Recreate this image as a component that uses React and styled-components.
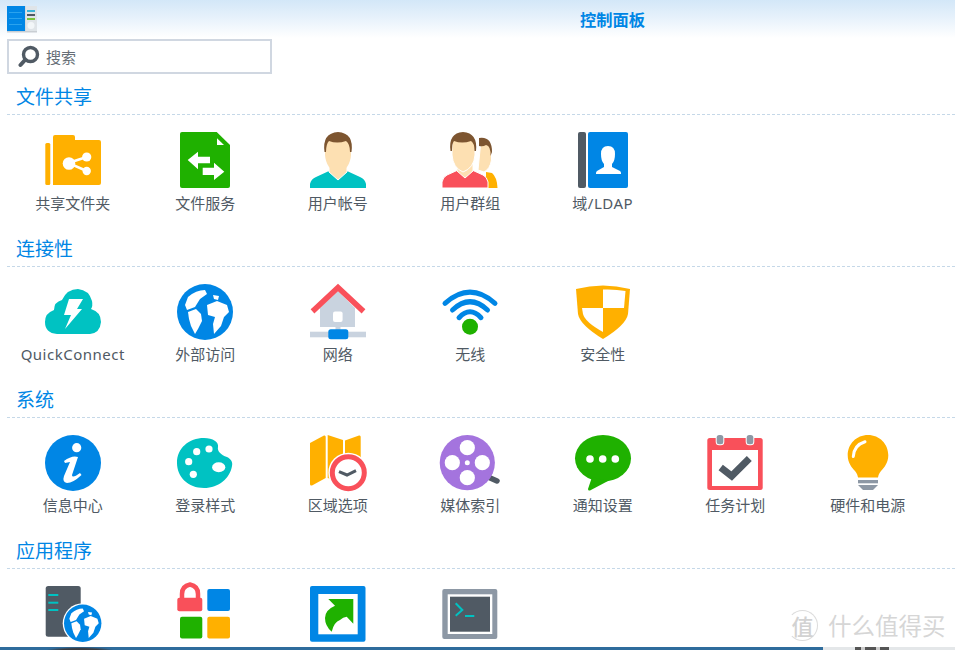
import React from "react";
import styled, { createGlobalStyle } from "styled-components";

const BLUE = "#0086e5", GREEN = "#1fb100", ORANGE = "#ffb000", RED = "#f9505a", TEAL = "#00c2c2", SLATE = "#505a64", GRAY = "#8d98a5", PALE = "#c9d3df", SKIN = "#fde0b2", HAIR = "#7d5530";

const Global = createGlobalStyle`
  html, body { margin: 0; padding: 0; background: #fff; }
  body { font-family: "Noto Sans", "Noto Sans CJK SC", sans-serif; }
`;
const Page = styled.div`
  position: relative; width: 955px; height: 650px; overflow: hidden;
  display: flex; flex-direction: column; background: #fff;
`;
const TitleBar = styled.header`
  flex: none; height: 38px; display: flex; align-items: center; padding-left: 7px;
  background: linear-gradient(180deg, #d3e7f8 0%, #e6f1fb 45%, #ffffff 100%);
`;
const AppLogo = styled.svg`flex: none; width: 31px; height: 27px;`;
const Title = styled.h1`
  margin: 0 0 0 542px; width: 66px; font-size: 16.25px; line-height: 38px; font-weight: 700;
  color: ${BLUE}; font-family: "Noto Sans CJK SC", sans-serif; white-space: nowrap;
`;
const Content = styled.main`flex: 1; min-height: 0; overflow: hidden;`;
const SearchBox = styled.div`
  box-sizing: border-box; width: 265px; height: 35px; margin: 1px 0 5.2px 7px;
  border: 2px solid #d0d7e1; display: flex; align-items: center; gap: 6px; padding-left: 9px;
`;
const SearchText = styled.span`font-size: 15px; color: #666e76; font-family: "Noto Sans CJK SC", sans-serif;`;
const Section = styled.section`height: 151.33px;`;
const SectionHead = styled.h2`
  box-sizing: border-box; height: 36px; margin: 0 0 0 7px; padding: 4.2px 0 0 9px;
  font-size: 19px; line-height: 26px; font-weight: 400; color: ${BLUE};
  border-bottom: 1px dashed #c5d8e8; font-family: "Noto Sans CJK SC", sans-serif;
`;
const Grid = styled.div`
  display: grid; grid-template-columns: repeat(7, 132.5px); padding: 17px 0 0 6.5px;
`;
const Item = styled.div`display: flex; flex-direction: column; align-items: center;`;
const Icon = styled.svg`display: block; width: 56px; height: 56px; overflow: visible;`;
const Label = styled.span`
  margin-top: 3.6px; font-size: 15px; line-height: 22px; color: ${SLATE}; white-space: nowrap;
  letter-spacing: ${(p) => (p.$latin ? "0.5px" : "0")};
`;
const BottomStrip = styled.div`
  flex: none; height: 3px;
  background:
    radial-gradient(ellipse 36px 4px at 80px 4px, #3a3d42 60%, transparent 100%),
    linear-gradient(90deg, #2f6c9c 0, #2f6c9c 823px, #e4e7e9 823px, #e4e7e9 855px, #555 855px, #555 861px, #ccc 861px, #ccc 865px, #555 865px, #555 876px, #ccc 876px, #ccc 880px, #555 880px, #555 889px, #e4e7e9 889px);
`;
const Watermark = styled.div`
  position: absolute; left: 787px; top: 608px; display: flex; align-items: center; gap: 10px;
  color: #d6d6d6; font-family: "Noto Sans CJK SC", sans-serif; pointer-events: none;
`;
const Seal = styled.span`
  box-sizing: border-box; width: 31px; height: 31px; border: 1.5px solid #dcdcdc; border-radius: 50%;
  border-left-color: transparent; display: flex; align-items: center; justify-content: center;
  font-size: 22px; line-height: 1; font-weight: 500; color: #d2d2d2;
`;
const WatermarkText = styled.span`font-size: 23.5px; line-height: 34px; white-space: nowrap;`;

const GlobeLand = ({ fill = "#fff" }) => (
  <g fill={fill}>
    <path d="M11 13Q19 6 28 6L30 10L23 15L18 23L10 26L8 21Z" />
    <path d="M11 28L19 25L24 30L25 37L21 45L18 50L14 42L12 35Z" />
    <path d="M30 21L40 17L50 21L52 28L47 33L44 42L37 50L36 40L38 33L31 31Z" />
    <path d="M36 11L42 12L41 16L37 15Z" />
  </g>
);

const Folder = () => (
  <Icon viewBox="0 0 56 56">
    <rect x="0.3" y="11" width="5" height="42" rx="1.5" fill={ORANGE} />
    <path d="M8 5Q8 3 10 3H28Q30 3 30 5V8H54Q56 8 56 10V51Q56 53 54 53H8Z" fill={ORANGE} />
    <path d="M41.7 25L23.3 31L41.7 39" stroke="#fff" strokeWidth="2.5" fill="none" />
    <circle cx="41.7" cy="25" r="4.6" fill="#fff" /><circle cx="41.7" cy="39" r="4.2" fill="#fff" /><circle cx="24" cy="31.5" r="6.3" fill="#fff" />
  </Icon>
);
const FileService = () => (
  <Icon viewBox="0 0 56 56">
    <path d="M3 2Q3 0 5 0H39.7L53 13V54Q53 56 51 56H5Q3 56 3 54Z" fill={GREEN} />
    <path d="M40 6.3V13H47Z" fill="#fff" />
    <path d="M10.7 28L21 19.7V24.7H33V31.3H21V37.3Z" fill="#fff" />
    <path d="M47.3 39.7L37 30.7V35.7H25.7V43H37V48Z" fill="#fff" />
  </Icon>
);
const User = () => (
  <Icon viewBox="0 0 56 56">
    <path d="M0 56V52Q1 47 6 45L19 39L28 46L37 39L50 45Q55 47 56 52V56Z" fill={TEAL} />
    <path d="M19 30H37V40L28 48L19 40Z" fill={SKIN} stroke="#fff" strokeWidth="1" />
    <path d="M15 14Q15 1 28 1Q41 1 41 14V23Q40 37 28 41Q16 37 15 23Z" fill={SKIN} />
    <path d="M14.5 20Q12 1 28 0Q44 1 41.5 20L40 20Q40 12 36 9Q27 12 19 9Q16 12 16 20Z" fill={HAIR} />
  </Icon>
);
const Group = () => (
  <Icon viewBox="0 0 56 56">
    <path d="M44 40L50 41Q55 45 55.5 56H44Z" fill={ORANGE} />
    <path d="M39 8Q49 7 49.5 18V28Q48 37 42 40L36 38Z" fill={SKIN} stroke="#fff" strokeWidth="1" />
    <path d="M37 6Q50 4 50 20L48.5 24Q49 14 44 13Q41 15 37 14Z" fill={HAIR} />
    <path d="M0 56V50Q1 45 5 43L16 38L23 45L30 38L41 43Q45 45 46 50V56Z" fill={RED} stroke="#fff" strokeWidth="1" />
    <path d="M15 30H31V39L23 46L15 39Z" fill={SKIN} stroke="#fff" strokeWidth="1" />
    <path d="M10 14Q10 1 21 1Q33 1 33 14V23Q32 36 21 40Q11 36 10 23Z" fill={SKIN} stroke="#fff" strokeWidth="1" />
    <path d="M8.5 19Q6 1 21 0Q36 1 34 19L32.5 19Q32.5 11 29 9Q20 12 12 9Q10 11 10 19Z" fill={HAIR} />
  </Icon>
);
const Directory = () => (
  <Icon viewBox="0 0 56 56">
    <rect x="3" y="0" width="8" height="56" rx="2" fill={SLATE} />
    <rect x="13" y="0" width="40" height="56" rx="2" fill={BLUE} />
    <path d="M33 14Q40 14 40 22Q40 29 37 32V35L45 39Q46 40 46 41V42H21V41Q21 40 22 39L29 35V32Q26 29 26 22Q26 14 33 14Z" fill="#fff" />
  </Icon>
);
const QuickConnect = () => (
  <Icon viewBox="0 0 56 56">
    <path d="M12 50Q0 49 0 38Q0 29 9 26Q9 18 17 16Q22 5 33 5Q44 6 47 17Q48 22 46 25Q56 28 56 38Q55 49 45 50Z" fill={TEAL} />
    <path d="M24 15H38L32 25H37L20 45L26 31H19Z" fill="#fff" />
  </Icon>
);
const Globe = () => (
  <Icon viewBox="0 0 56 56">
    <circle cx="28" cy="28" r="28" fill={BLUE} />
    <GlobeLand />
  </Icon>
);
const Network = () => (
  <Icon viewBox="0 0 56 56">
    <path d="M10 24L28 7L45 24V43H10Z" fill={PALE} />
    <rect x="23" y="27.5" width="9.6" height="10.5" rx="2" fill="#fff" />
    <rect x="25.5" y="43" width="5" height="5" fill={PALE} />
    <rect x="0" y="47.7" width="56" height="5.6" fill={PALE} />
    <rect x="18.3" y="45.3" width="20" height="10" rx="2.5" fill={BLUE} />
    <path d="M4.5 25.5L28 3.5L51.5 25.5" fill="none" stroke={RED} strokeWidth="5.5" strokeLinecap="square" />
  </Icon>
);
const Wifi = () => (
  <Icon viewBox="0 0 56 56">
    <g fill="none" stroke={BLUE} strokeWidth="5" strokeLinecap="round">
      <path d="M3 19.3Q28 -3 53 19.3" />
      <path d="M10.5 26Q28 9.5 45.5 26" />
      <path d="M17 33.7Q28 22 39 33.7" />
    </g>
    <circle cx="28" cy="42.7" r="8" fill={GREEN} />
  </Icon>
);
const Shield = () => (
  <Icon viewBox="0 0 56 56">
    <path d="M1 5Q28 -2 55 5L53 30Q51 41 28 55Q5 41 3 30Z" fill={ORANGE} />
    <path d="M28 5.5Q40 5 50.5 7L49 24H28Z" fill="#fff" />
    <path d="M7 24H28V48Q10 38 8 30Z" fill="#fff" />
  </Icon>
);
const Info = () => (
  <Icon viewBox="0 0 56 56">
    <circle cx="28" cy="28" r="28" fill={BLUE} />
    <circle cx="31.7" cy="12.7" r="4.6" fill="#fff" />
    <path d="M19 26Q27 20 33 22L27 40Q27 44 35 38L36.5 40Q28 48 22 48Q17 47 19 41L25 27L20 28Z" fill="#fff" />
  </Icon>
);
const Palette = () => (
  <Icon viewBox="0 0 56 56">
    <path fillRule="evenodd" fill={TEAL} d="M27 3C36 3 42 7 41 12C40 16 44 20 50 22C54 24 56 27 55 31C53 43 42 53 27 53C11 53 0 42 0 28C0 13 12 3 27 3Z" />
    <g fill="#fff">
      <circle cx="19.7" cy="16.7" r="3.6" /><circle cx="32" cy="14" r="3.6" /><circle cx="11.7" cy="26.7" r="3.6" /><circle cx="16.3" cy="39.3" r="3.6" />
      <ellipse cx="41.7" cy="32.3" rx="6.6" ry="5" />
    </g>
  </Icon>
);
const MapClock = () => (
  <Icon viewBox="0 0 56 56">
    <g fill={ORANGE}>
      <path d="M0 8L14 0.5Q15.7 0 15.7 2V43L2 50.5Q0 51 0 49Z" />
      <path d="M17.7 0L33 5V48L17.7 43Z" />
      <path d="M35 5.5L49 0.5Q50.7 0 50.7 2V30H35Z" />
    </g>
    <circle cx="38.3" cy="37.7" r="20" fill="#fff" />
    <circle cx="38.3" cy="37.7" r="16" fill="#fff" stroke={RED} strokeWidth="5" />
    <path d="M29 36.7L37 40L46 35.7" fill="none" stroke={SLATE} strokeWidth="3" />
  </Icon>
);
const Reel = () => (
  <Icon viewBox="0 0 56 56">
    <path d="M46 42L55 46" stroke={SLATE} strokeWidth="5.5" strokeLinecap="round" />
    <circle cx="25.3" cy="27.7" r="27.6" fill="#a474de" />
    <g fill="#fff">
      <circle cx="25.3" cy="12.7" r="7.6" /><circle cx="25.3" cy="42.7" r="7.6" /><circle cx="10.3" cy="27.7" r="7.6" /><circle cx="40.3" cy="27.7" r="7.6" />
      <circle cx="25.3" cy="27.7" r="2.5" />
    </g>
  </Icon>
);
const Chat = () => (
  <Icon viewBox="0 0 56 56">
    <ellipse cx="28" cy="23.3" rx="28" ry="23.3" fill={GREEN} />
    <path d="M17 42L13 54Q13 56 15 55.5L33 46Z" fill={GREEN} />
    <g fill="#fff"><circle cx="15" cy="24" r="3.8" /><circle cx="27.7" cy="24" r="3.8" /><circle cx="40.3" cy="24" r="3.8" /></g>
  </Icon>
);
const Calendar = () => (
  <Icon viewBox="0 0 56 56">
    <rect x="0.3" y="3" width="55.4" height="52" rx="2.5" fill={RED} />
    <rect x="5" y="15" width="46" height="36" fill="#fff" />
    <rect x="8.7" y="-1" width="8.6" height="11.3" rx="3.5" fill="#fff" /><rect x="38.7" y="-1" width="8.6" height="11.3" rx="3.5" fill="#fff" />
    <rect x="9.7" y="0" width="6.6" height="9.3" rx="2.5" fill={GRAY} /><rect x="39.7" y="0" width="6.6" height="9.3" rx="2.5" fill={GRAY} />
    <path d="M13.7 32.5L24.7 41L42.3 23.5" fill="none" stroke={SLATE} strokeWidth="7" />
  </Icon>
);
const Bulb = () => (
  <Icon viewBox="0 0 56 56">
    <path d="M28 0C39.5 0 48.3 9 48.3 20.3C48.3 28 44 33 41 36C39 38.5 38.5 40 38 42.5H18C17.5 40 17 38.5 15 36C12 33 7.7 28 7.7 20.3C7.7 9 16.5 0 28 0Z" fill={ORANGE} />
    <path d="M13.3 21.5Q14 10 25 6.7" fill="none" stroke="#fff" strokeWidth="3" strokeLinecap="round" />
    <rect x="18" y="45" width="20" height="3.3" fill={GRAY} />
    <path d="M18 50H38L33 55H23Z" fill={GRAY} />
  </Icon>
);
const Server = () => (
  <Icon viewBox="0 0 56 56">
    <rect x="0.7" y="0" width="35" height="50.7" rx="2.5" fill={SLATE} />
    <g fill={TEAL}><rect x="3.3" y="8" width="10" height="2" /><rect x="3.3" y="15.7" width="10" height="2" /><rect x="3.3" y="23" width="10" height="2" /></g>
    <circle cx="37.7" cy="37.3" r="20" fill="#fff" />
    <g transform="translate(19 18.6) scale(.668)">
      <circle cx="28" cy="28" r="28" fill={BLUE} />
      <GlobeLand />
    </g>
  </Icon>
);
const Permissions = () => (
  <Icon viewBox="0 0 56 56">
    <path d="M7 13V8Q7 0 15 -1.5Q23 0 23 8V13" fill="none" stroke={RED} strokeWidth="4.5" transform="translate(-2 0)" />
    <rect x="0.3" y="11.7" width="25" height="13.6" rx="2" fill={RED} />
    <rect x="30.3" y="3" width="22.7" height="22" rx="2" fill={BLUE} />
    <rect x="3" y="30.7" width="22.3" height="21.7" rx="2" fill={GREEN} />
    <rect x="30.3" y="30.7" width="22.7" height="21.7" rx="2" fill={ORANGE} />
  </Icon>
);
const Shortcut = () => (
  <Icon viewBox="0 0 56 56">
    <rect x="0" y="0" width="55.5" height="55.7" rx="2" fill={BLUE} />
    <rect x="8.3" y="8" width="39.4" height="40.3" fill="#fff" />
    <path d="M43.3 13H18.3L25 19.7Q15 24 15 32Q15 40 21.7 45.7Q24 36 30 34Q33 31 36.7 30.7L43.3 37.7Z" fill={GREEN} />
  </Icon>
);
const Terminal = () => (
  <Icon viewBox="0 0 56 56">
    <rect x="0.3" y="3" width="55" height="50" rx="2" fill={GRAY} />
    <rect x="5.7" y="8.3" width="44.6" height="39.7" fill="#fff" />
    <rect x="8" y="10.7" width="40" height="35" fill={SLATE} />
    <path d="M13.7 17.3L20.3 24L13.7 29.7" fill="none" stroke={TEAL} strokeWidth="2" />
    <rect x="23" y="29" width="9.3" height="2" fill={TEAL} />
  </Icon>
);

const sections = [
  { title: "文件共享", items: [[Folder, "共享文件夹"], [FileService, "文件服务"], [User, "用户帐号"], [Group, "用户群组"], [Directory, "域/LDAP", true]] },
  { title: "连接性", items: [[QuickConnect, "QuickConnect", true], [Globe, "外部访问"], [Network, "网络"], [Wifi, "无线"], [Shield, "安全性"]] },
  { title: "系统", items: [[Info, "信息中心"], [Palette, "登录样式"], [MapClock, "区域选项"], [Reel, "媒体索引"], [Chat, "通知设置"], [Calendar, "任务计划"], [Bulb, "硬件和电源"]] },
  { title: "应用程序", items: [[Server, ""], [Permissions, ""], [Shortcut, ""], [Terminal, ""]] },
];

export default function App() {
  return (
    <Page>
      <Global />
      <TitleBar>
        <AppLogo viewBox="0 0 31 27">
          <rect x="0" y="0" width="30" height="26.5" fill="#c9ced3" />
          <rect x="0" y="0" width="18" height="25" fill={BLUE} />
          <g fill="#2aa3ee"><rect x="2" y="6" width="13" height="1" /><rect x="2" y="12" width="13" height="1" /><rect x="2" y="18" width="13" height="1" /></g>
          <rect x="18.5" y="0" width="11.5" height="25" fill="#dfe4e8" />
          <rect x="20" y="4" width="8" height="2" fill="#3bb4d8" /><rect x="20" y="8" width="8" height="2" fill={SLATE} /><rect x="20" y="12" width="8" height="2" fill="#7cc43c" />
          <circle cx="24" cy="19.5" r="3.5" fill="#f2f6f8" />
        </AppLogo>
        <Title>控制面板</Title>
      </TitleBar>
      <Content>
        <SearchBox>
          <svg width="22" height="23" viewBox="0 0 22 23">
            <circle cx="12.5" cy="9.5" r="7" fill="none" stroke={SLATE} strokeWidth="3.4" />
            <path d="M7 15L2.5 20" stroke={SLATE} strokeWidth="4" strokeLinecap="round" />
          </svg>
          <SearchText>搜索</SearchText>
        </SearchBox>
        {sections.map((s) => (
          <Section key={s.title}>
            <SectionHead>{s.title}</SectionHead>
            <Grid>
              {s.items.map(([Ico, label, latin], i) => (
                <Item key={i}>
                  <Ico />
                  {label && <Label $latin={latin}>{label}</Label>}
                </Item>
              ))}
            </Grid>
          </Section>
        ))}
      </Content>
      <BottomStrip />
      <Watermark>
        <Seal>值</Seal>
        <WatermarkText>什么值得买</WatermarkText>
      </Watermark>
    </Page>
  );
}
